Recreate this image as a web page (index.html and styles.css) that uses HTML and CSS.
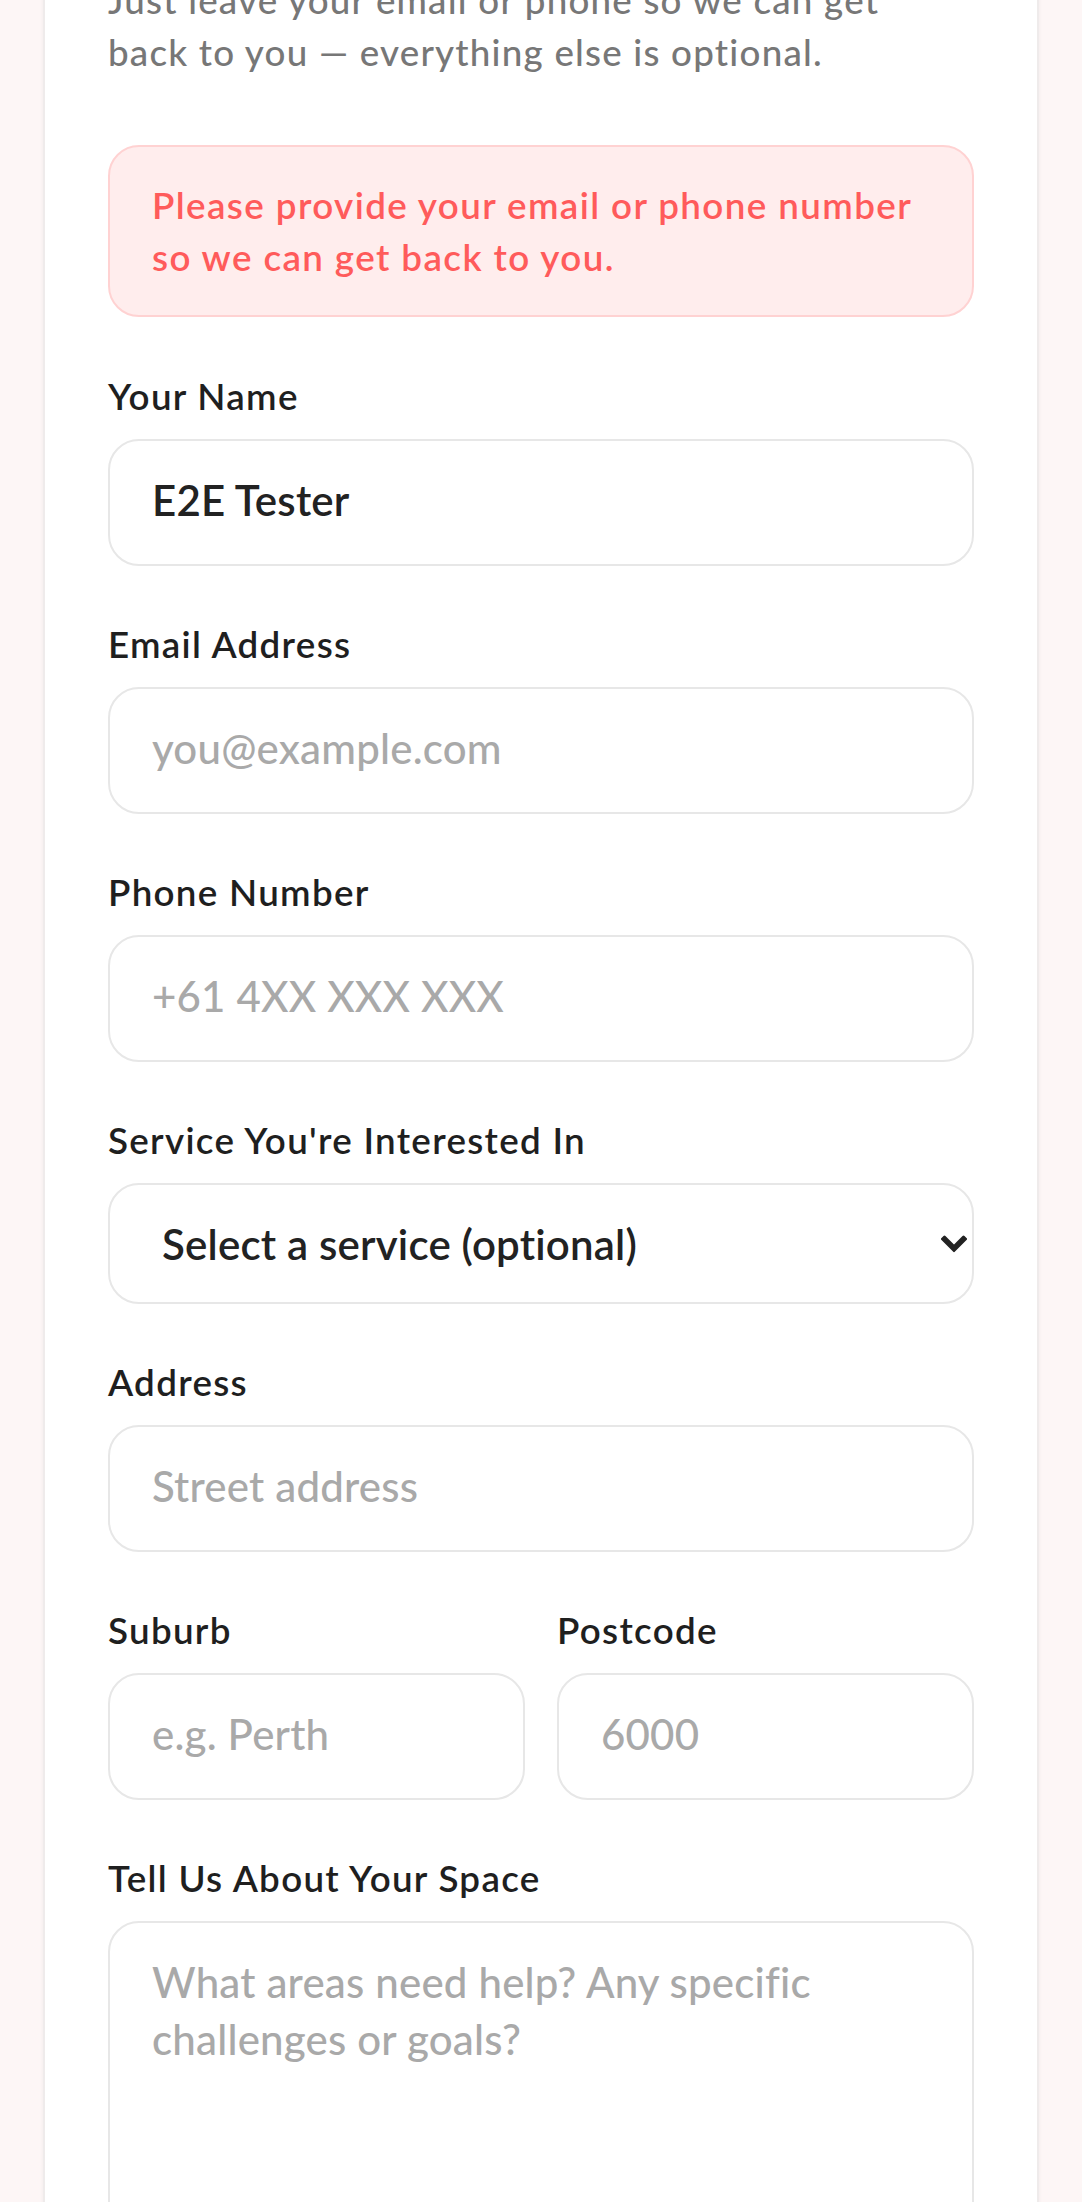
FILE: index.html
```html
<!DOCTYPE html>
<html lang="en">
<head>
<meta charset="utf-8">
<title>Contact form</title>
<link rel="stylesheet" href="styles.css">
</head>
<body>
<main class="page">
  <section class="card">
    <p class="intro">Just leave your email or phone so we can get<br>back to you — everything else is optional.</p>
    <div class="alert">Please provide your email or phone number so we can get back to you.</div>
    <form class="form">
      <div class="field">
        <label class="label" for="name">Your Name</label>
        <input class="control input" id="name" type="text" value="E2E Tester">
      </div>
      <div class="field">
        <label class="label" for="email">Email Address</label>
        <input class="control input" id="email" type="email" placeholder="you@example.com">
      </div>
      <div class="field">
        <label class="label" for="phone">Phone Number</label>
        <input class="control input" id="phone" type="tel" placeholder="+61 4XX XXX XXX">
      </div>
      <div class="field">
        <label class="label" for="service">Service You're Interested In</label>
        <div class="select-wrap">
          <select class="control select" id="service">
            <option>Select a service (optional)</option>
          </select>
          <svg class="chevron" width="26" height="17" viewBox="0 0 26 17" aria-hidden="true"><path d="M3.5 3.5 L13 13 L22.5 3.5" fill="none" stroke="#222" stroke-width="5.5" stroke-linecap="square" stroke-linejoin="miter"/></svg>
        </div>
      </div>
      <div class="field">
        <label class="label" for="address">Address</label>
        <input class="control input" id="address" type="text" placeholder="Street address">
      </div>
      <div class="field-row">
        <div class="field">
          <label class="label" for="suburb">Suburb</label>
          <input class="control input" id="suburb" type="text" placeholder="e.g. Perth">
        </div>
        <div class="field">
          <label class="label" for="postcode">Postcode</label>
          <input class="control input" id="postcode" type="text" placeholder="6000">
        </div>
      </div>
      <div class="field">
        <label class="label" for="space">Tell Us About Your Space</label>
        <textarea class="control textarea" id="space" placeholder="What areas need help? Any specific challenges or goals?"></textarea>
      </div>
    </form>
  </section>
</main>
</body>
</html>
```

FILE: styles.css
```css
* {
  box-sizing: border-box;
}

html, body {
  margin: 0;
  padding: 0;
  background: #fdf6f6;
}

body {
  font-family: Lato, "Liberation Sans", sans-serif;
  color: #222;
  overflow: hidden;
}

.page {
  padding: 0 43px;
}

.card {
  margin-top: -26px;
  background: #fff;
  border: 2px solid #efebeb;
  border-top: none;
  box-shadow: 0 0 4px rgba(0, 0, 0, 0.05);
  padding: 0 63px 200px;
}

.intro {
  margin: 0 0 67px;
  font-size: 36.75px;
  line-height: 52px;
  font-weight: 500;
  letter-spacing: 1.2px;
  color: #777;
}

.alert {
  margin-bottom: 57px;
  background: #ffeded;
  border: 2px solid #ffd2d2;
  border-radius: 31px;
  padding: 32px 42px;
  color: #ff5b5b;
  font-size: 36.75px;
  line-height: 52px;
  font-weight: 600;
  letter-spacing: 1.4px;
}

.form {
  display: flex;
  flex-direction: column;
  gap: 56px;
}

.field {
  display: flex;
  flex-direction: column;
  gap: 21px;
  min-width: 0;
}

.field-row {
  display: grid;
  grid-template-columns: 1fr 1fr;
  gap: 32px;
}

.label {
  font-size: 36.75px;
  line-height: 44px;
  font-weight: 600;
  letter-spacing: 1.3px;
  color: #1f1f1f;
}

.control {
  display: block;
  width: 100%;
  height: 127px;
  margin: 0;
  padding: 0 42px;
  border: 2.5px solid #e7e7e7;
  border-radius: 31px;
  background: #fff;
  font-family: Lato, "Liberation Sans", sans-serif;
  font-size: 42px;
  font-weight: 600;
  letter-spacing: 0.2px;
  color: #222;
  outline: none;
}

.input {
  padding-bottom: 5px;
}

.control::placeholder {
  color: #a9a9a9;
  font-weight: 500;
  opacity: 1;
}

.select-wrap {
  position: relative;
}

.select {
  height: 121px;
  padding-left: 52px;
  -webkit-appearance: none;
  appearance: none;
}

.chevron {
  position: absolute;
  right: 7px;
  top: 50%;
  transform: translateY(-50%);
  pointer-events: none;
}

.textarea {
  height: 340px;
  padding: 31px 42px;
  line-height: 57px;
  resize: none;
}
```
